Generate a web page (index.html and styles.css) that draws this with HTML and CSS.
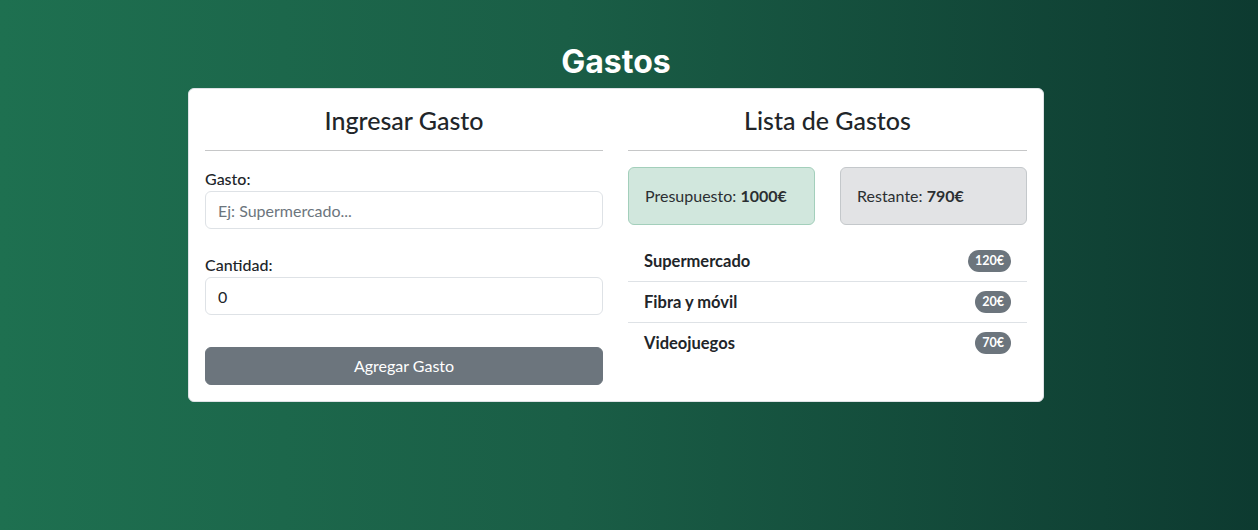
FILE: index.html
```html
<!DOCTYPE html>
<html lang="es">
<head>
<meta charset="utf-8">
<title>Gastos</title>
<link rel="stylesheet" href="styles.css">
</head>
<body>
<main class="page">
  <h1 class="title">Gastos</h1>
  <section class="card">
    <div class="col">
      <h3 class="col-title">Ingresar Gasto</h3>
      <hr class="divider">
      <form class="form">
        <label class="label" for="gasto">Gasto:</label>
        <input class="input" id="gasto" type="text" placeholder="Ej: Supermercado...">
        <label class="label label-gap" for="cantidad">Cantidad:</label>
        <input class="input" id="cantidad" type="number" value="0">
        <button class="btn" type="button">Agregar Gasto</button>
      </form>
    </div>
    <div class="col">
      <h3 class="col-title">Lista de Gastos</h3>
      <hr class="divider">
      <div class="summary">
        <div class="box box-success">Presupuesto: <b>1000€</b></div>
        <div class="box box-secondary">Restante: <b>790€</b></div>
      </div>
      <ul class="list">
        <li class="item"><span>Supermercado</span><span class="badge">120€</span></li>
        <li class="item"><span>Fibra y móvil</span><span class="badge">20€</span></li>
        <li class="item"><span>Videojuegos</span><span class="badge">70€</span></li>
      </ul>
    </div>
  </section>
</main>
</body>
</html>
```
FILE: styles.css
```css
* { box-sizing: border-box; }
html, body { height: 100%; }
body {
  margin: 0;
  font-family: "Lato", "Liberation Sans", sans-serif;
  font-size: 16px;
  line-height: 1.5;
  color: #212529;
  background: linear-gradient(to right, #1e7050 0%, #1a5e46 45%, #0d3a30 100%);
}
.page {
  width: 1232px;
  display: flex;
  flex-direction: column;
  align-items: center;
  padding-top: 43px;
}
.title {
  margin: 0 0 7px;
  font-family: "Inter", "DejaVu Sans", sans-serif;
  font-weight: 700;
  font-size: 32px;
  line-height: 38px;
  color: #fff;
}
.card {
  width: 856px;
  background: #fff;
  border: 1px solid #dee2e6;
  border-radius: 6px;
  padding: 16px;
  display: grid;
  grid-template-columns: 398px 399px;
  column-gap: 25px;
}
.col { display: flex; flex-direction: column; }
.col-title {
  margin: 0;
  padding-bottom: 3px;
  text-align: center;
  font-weight: 500;
  font-size: 25px;
  line-height: 31px;
}
.divider {
  margin: 11px 0 16px;
  border: 0;
  border-top: 1px solid #c6c7c8;
}
.form { display: flex; flex-direction: column; }
.label { font-weight: 500; line-height: 24px; }
.label-gap { margin-top: 24px; }
.input {
  height: 38px;
  padding: 6px 12px;
  font: inherit;
  color: #212529;
  border: 1px solid #dee2e6;
  border-radius: 6px;
  background: #fff;
  outline: none;
}
.input::placeholder { color: #6c757d; }
.input::-webkit-inner-spin-button { -webkit-appearance: none; margin: 0; }
.btn {
  margin-top: 32px;
  height: 38px;
  font: inherit;
  color: #fff;
  background: #6c757d;
  border: 1px solid #6c757d;
  border-radius: 6px;
}
.summary {
  display: grid;
  grid-template-columns: 1fr 1fr;
  column-gap: 25px;
}
.box {
  padding: 16px;
  border: 1px solid;
  border-radius: 6px;
  line-height: 24px;
  color: #2b2f32;
}
.box b { font-weight: 700; }
.box-success { background: #d1e7dd; border-color: #a3cfbb; }
.box-secondary { background: #e2e3e5; border-color: #c4c8cb; }
.list {
  list-style: none;
  margin: 16px 0 0;
  padding: 0;
}
.item {
  display: flex;
  justify-content: space-between;
  align-items: center;
  padding: 8px 16px;
  font-weight: 700;
  font-size: 16.5px;
  line-height: 24px;
  border-bottom: 1px solid #dee2e6;
}
.item:last-child { border-bottom: 0; }
.badge {
  display: inline-block;
  padding: 5px 7px;
  font-size: 12.5px;
  line-height: 12px;
  font-weight: 700;
  color: #fff;
  background: #6c757d;
  border-radius: 999px;
}
```
